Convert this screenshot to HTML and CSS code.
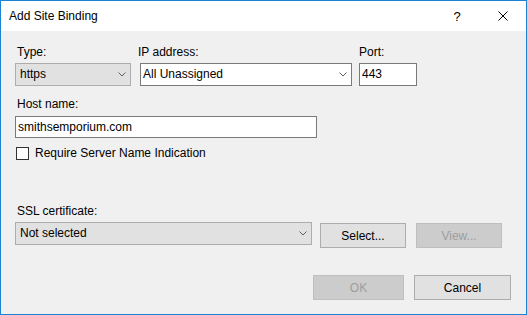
FILE: index.html
```html
<!DOCTYPE html>
<html lang="en">
<head>
    <meta charset="UTF-8">
    <title>Add Site Binding</title>
    <link rel="stylesheet" href="styles.css">
</head>
<body>
    <div class="dialog">
        <div class="titlebar">
            <span class="title">Add Site Binding</span>
            <span class="cap-btn help">?</span>
            <span class="cap-btn close">
                <svg width="10" height="10" viewBox="0 0 10 10"><path d="M0.5 0.5 L9.5 9.5 M9.5 0.5 L0.5 9.5" stroke="#000" stroke-width="1" fill="none"/></svg>
            </span>
        </div>

        <div class="content">
            <div class="row-binding">
                <div class="field field-type">
                    <label>Type:</label>
                    <div class="combo combo-gray">
                        <span>https</span>
                        <svg class="chevron" width="8" height="5" viewBox="0 0 8 5"><polyline points="0.5,0.5 4,4 7.5,0.5" stroke="#606060" fill="none"/></svg>
                    </div>
                </div>
                <div class="field field-ip">
                    <label>IP address:</label>
                    <div class="combo combo-white">
                        <span>All Unassigned</span>
                        <svg class="chevron" width="8" height="5" viewBox="0 0 8 5"><polyline points="0.5,0.5 4,4 7.5,0.5" stroke="#606060" fill="none"/></svg>
                    </div>
                </div>
                <div class="field field-port">
                    <label>Port:</label>
                    <div class="textbox">443</div>
                </div>
            </div>

            <div class="field field-host">
                <label>Host name:</label>
                <div class="textbox">smithsemporium.com</div>
            </div>

            <div class="check-row">
                <span class="checkbox"></span>
                <span>Require Server Name Indication</span>
            </div>

            <div class="field field-ssl">
                <label>SSL certificate:</label>
                <div class="ssl-row">
                    <div class="combo combo-gray ssl-combo">
                        <span>Not selected</span>
                        <svg class="chevron" width="8" height="5" viewBox="0 0 8 5"><polyline points="0.5,0.5 4,4 7.5,0.5" stroke="#606060" fill="none"/></svg>
                    </div>
                    <button class="btn btn-select">Select...</button>
                    <button class="btn btn-view" disabled>View...</button>
                </div>
            </div>

            <div class="actions">
                <button class="btn btn-ok" disabled>OK</button>
                <button class="btn btn-cancel">Cancel</button>
            </div>
        </div>
    </div>
</body>
</html>
```

FILE: styles.css
```css
* {
    box-sizing: border-box;
}

body {
    margin: 0;
    font-family: "Segoe UI", "Liberation Sans", Arial, sans-serif;
    font-size: 12px;
    color: #000;
}

.dialog {
    width: 527px;
    height: 315px;
    border: 1px solid #1883d7;
    background-color: #f0f0f0;
    display: flex;
    flex-direction: column;
}

/* Barra de titulo */
.titlebar {
    height: 30px;
    background-color: #fff;
    display: flex;
    align-items: center;
}

.title {
    flex: 1;
    padding-left: 8px;
    line-height: 15px;
}

.cap-btn {
    width: 46px;
    height: 30px;
    display: flex;
    align-items: center;
    justify-content: center;
    font-size: 13px;
}

/* Conteudo */
.content {
    padding: 14px 15px 0 14px;
}

.row-binding {
    display: flex;
    align-items: flex-start;
}

.field label {
    display: block;
    height: 15px;
    line-height: 15px;
    padding-left: 2px;
    margin-bottom: 3px;
}

.field-type {
    width: 116px;
}

.field-ip {
    width: 212px;
    margin-left: 9px;
}

.field-ip label {
    padding-left: 0;
    margin-left: -2px;
}

.field-port {
    width: 58px;
    margin-left: 7px;
}

.field-port label {
    padding-left: 0;
}

.combo {
    height: 23px;
    display: flex;
    align-items: center;
    justify-content: space-between;
    padding-right: 4px;
    line-height: 21px;
}

.combo-gray {
    background-color: #e1e1e1;
    border: 1px solid #adadad;
    padding-left: 4px;
}

.combo-white {
    background-color: #fff;
    border: 1px solid #7a7a7a;
    padding-left: 2px;
}

.chevron {
    display: block;
}

.textbox {
    height: 23px;
    background-color: #fff;
    border: 1px solid #7a7a7a;
    padding-left: 2px;
    line-height: 21px;
}

.field-host {
    width: 302px;
    margin-top: 11px;
}

.field-host label {
    margin-bottom: 4px;
}

.field-host .textbox {
    height: 22px;
    line-height: 20px;
}

.check-row {
    display: flex;
    align-items: center;
    height: 15px;
    margin-top: 8px;
    padding-left: 1px;
    line-height: 15px;
}

.checkbox {
    width: 13px;
    height: 13px;
    border: 1px solid #333;
    background-color: #fff;
    margin-right: 6px;
}

.field-ssl {
    margin-top: 43px;
}

.ssl-row {
    display: flex;
    align-items: flex-start;
}

.ssl-combo {
    width: 297px;
}

.btn {
    height: 25px;
    padding: 0;
    background-color: #e1e1e1;
    border: 1px solid #adadad;
    font-family: inherit;
    font-size: 12px;
    color: #000;
}

.btn:disabled {
    background-color: #cccccc;
    border-color: #bfbfbf;
    color: #9d9d9d;
}

.btn-select {
    width: 86px;
    margin-left: 8px;
    margin-top: 1px;
}

.btn-view {
    width: 86px;
    margin-left: 10px;
    margin-top: 1px;
}

.actions {
    display: flex;
    justify-content: flex-end;
    margin-top: 27px;
}

.btn-ok {
    width: 91px;
}

.btn-cancel {
    width: 97px;
    margin-left: 10px;
}
```
